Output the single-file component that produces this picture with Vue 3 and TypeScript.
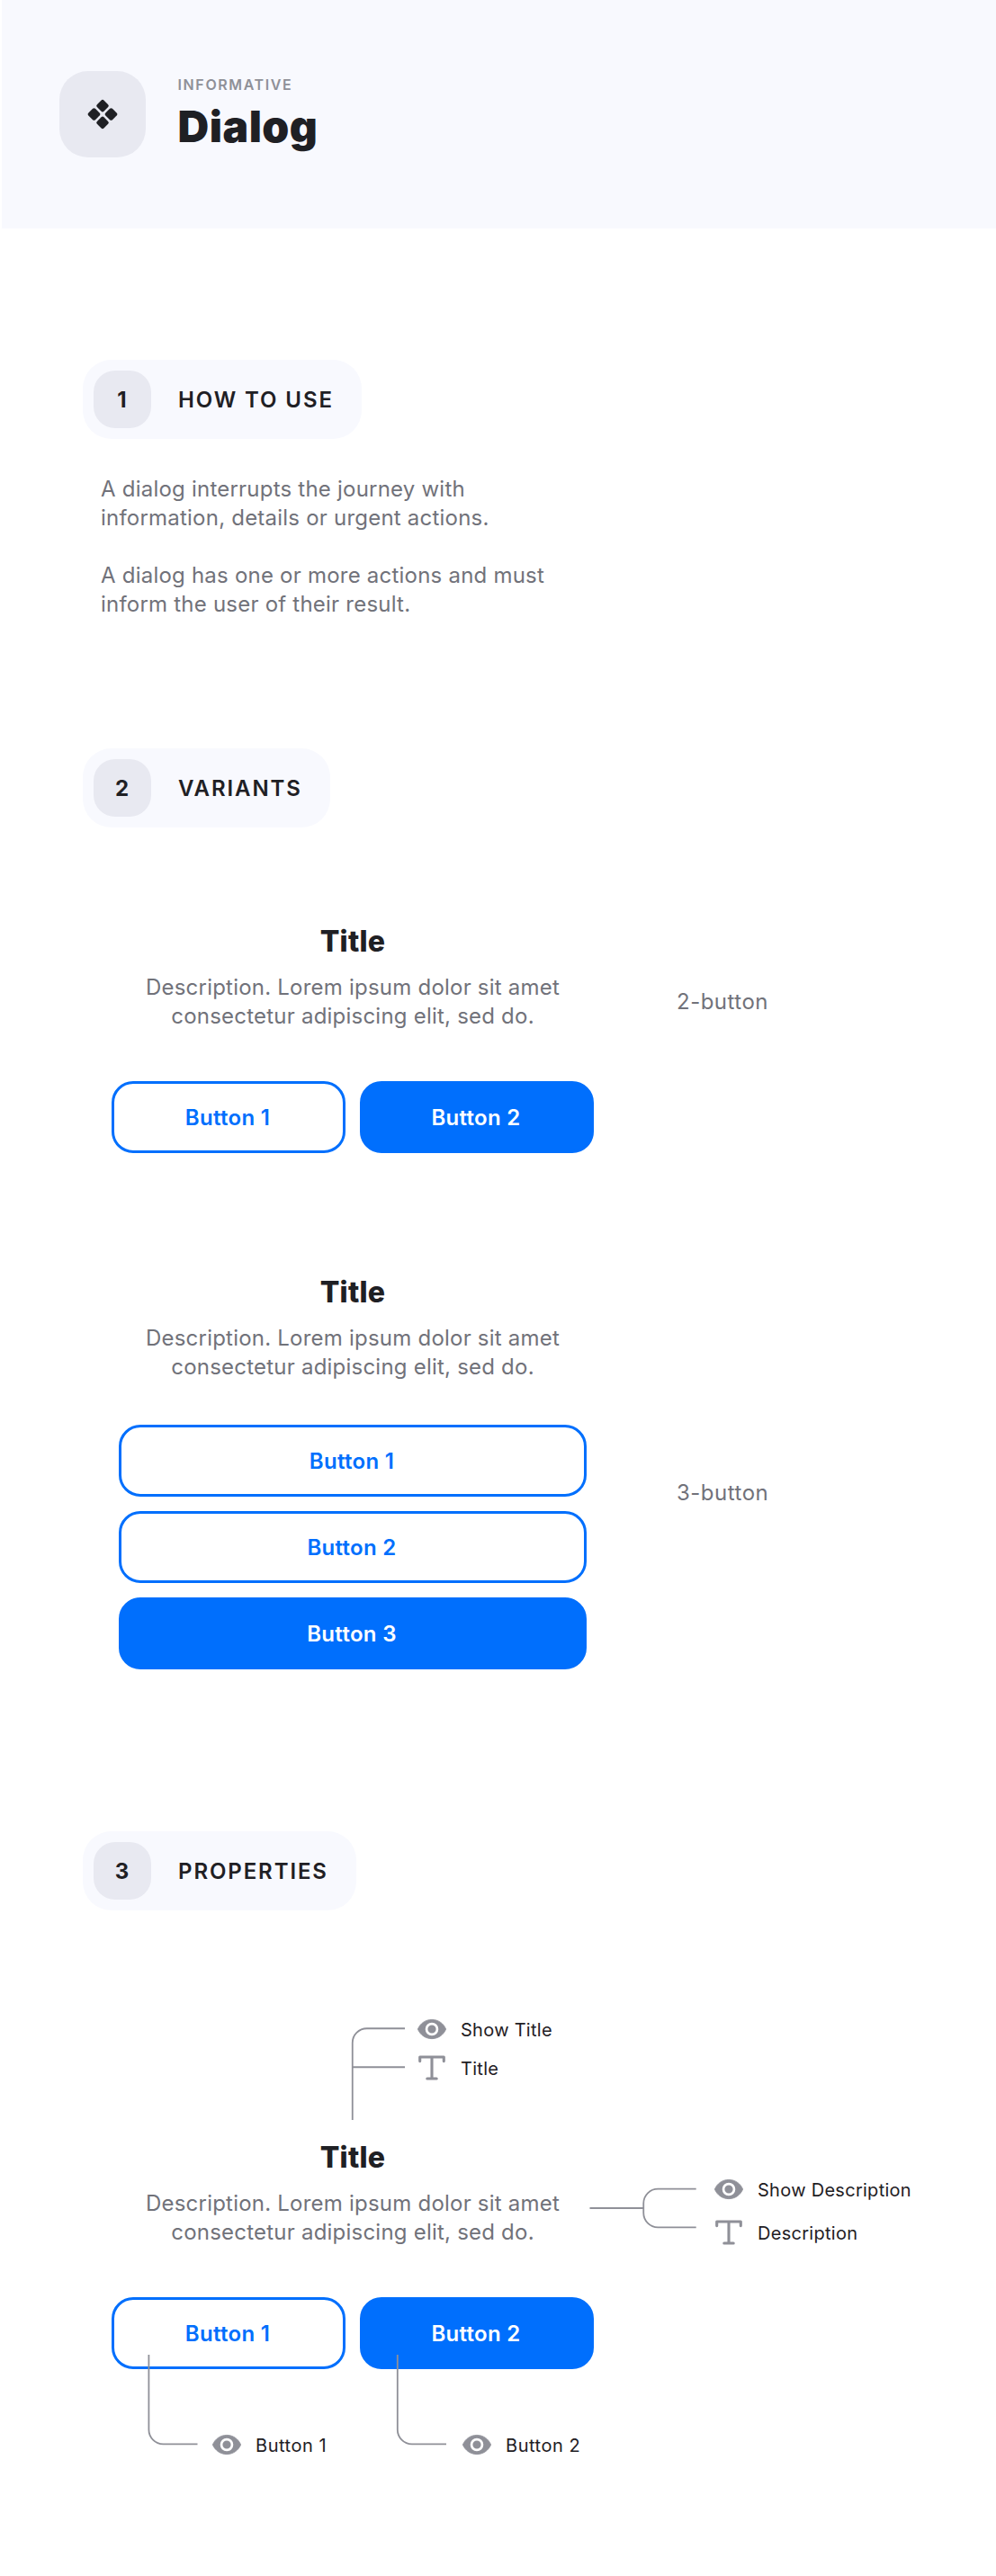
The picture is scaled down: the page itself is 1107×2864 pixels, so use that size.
<script setup lang="ts">
type IconName = 'eye' | 'text'

interface DialogButton {
  label: string
  primary: boolean
}

interface Variant {
  name: string
  layout: 'row' | 'stack'
  buttons: DialogButton[]
}

interface Callout {
  id: string
  items: { icon: IconName; label: string }[]
}

const title = 'Title'
const description = ['Description. Lorem ipsum dolor sit amet', 'consectetur adipiscing elit, sed do.']

const twoButtons: DialogButton[] = [
  { label: 'Button 1', primary: false },
  { label: 'Button 2', primary: true },
]

const variants: Variant[] = [
  { name: '2-button', layout: 'row', buttons: twoButtons },
  {
    name: '3-button',
    layout: 'stack',
    buttons: [
      { label: 'Button 1', primary: false },
      { label: 'Button 2', primary: false },
      { label: 'Button 3', primary: true },
    ],
  },
]

const callouts: Callout[] = [
  {
    id: 'title',
    items: [
      { icon: 'eye', label: 'Show Title' },
      { icon: 'text', label: 'Title' },
    ],
  },
  {
    id: 'description',
    items: [
      { icon: 'eye', label: 'Show Description' },
      { icon: 'text', label: 'Description' },
    ],
  },
  { id: 'button-1', items: [{ icon: 'eye', label: 'Button 1' }] },
  { id: 'button-2', items: [{ icon: 'eye', label: 'Button 2' }] },
]

const connectors = [
  'M391.75 233V147.25a16 16 0 0 1 16-16H450M391.75 174.25H450',
  'M655.5 331H715.25M773.7 309.7H731.25a16 16 0 0 0-16 16V336.3a16 16 0 0 0 16 16H773.7',
  'M165.4 494V577.3a16 16 0 0 0 16 16H219.5',
  'M441.8 494V577.3a16 16 0 0 0 16 16H496',
]
</script>

<template>
  <div class="page">
    <header class="hero">
      <div class="hero-icon">
        <svg width="34" height="34" viewBox="-17 -17 34 34" aria-hidden="true">
          <g fill="#1f2024">
            <rect x="-5.35" y="-5.35" width="10.7" height="10.7" rx="2" transform="translate(0 -9.4) rotate(45)" />
            <rect x="-5.35" y="-5.35" width="10.7" height="10.7" rx="2" transform="translate(9.5 0) rotate(45)" />
            <rect x="-5.35" y="-5.35" width="10.7" height="10.7" rx="2" transform="translate(0 9.4) rotate(45)" />
            <rect x="-5.35" y="-5.35" width="10.7" height="10.7" rx="2" transform="translate(-9.5 0) rotate(45)" />
          </g>
        </svg>
      </div>
      <div class="hero-text">
        <span class="eyebrow">INFORMATIVE</span>
        <h1>Dialog</h1>
      </div>
    </header>

    <section class="usage">
      <h2 class="pill"><span class="badge">1</span><span class="pill-label">HOW TO USE</span></h2>
      <div class="prose">
        <p>A dialog interrupts the journey with<br />information, details or urgent actions.</p>
        <p>A dialog has one or more actions and must<br />inform the user of their result.</p>
      </div>
    </section>

    <section class="variants">
      <h2 class="pill"><span class="badge">2</span><span class="pill-label">VARIANTS</span></h2>
      <div v-for="v in variants" :key="v.name" class="variant" :class="v.layout">
        <article class="dialog">
          <h3>{{ title }}</h3>
          <p class="desc">{{ description[0] }}<br />{{ description[1] }}</p>
          <div class="actions" :class="v.layout">
            <button v-for="b in v.buttons" :key="b.label" class="btn" :class="{ primary: b.primary }">{{ b.label }}</button>
          </div>
        </article>
        <span class="variant-name">{{ v.name }}</span>
      </div>
    </section>

    <section>
      <h2 class="pill"><span class="badge">3</span><span class="pill-label">PROPERTIES</span></h2>
      <div class="diagram">
        <article class="dialog">
          <h3>{{ title }}</h3>
          <p class="desc">{{ description[0] }}<br />{{ description[1] }}</p>
          <div class="actions row">
            <button v-for="b in twoButtons" :key="b.label" class="btn" :class="{ primary: b.primary }">{{ b.label }}</button>
          </div>
        </article>
        <svg class="wires" width="1107" height="740" viewBox="0 0 1107 740" aria-hidden="true">
          <path v-for="d in connectors" :key="d" :d="d" />
        </svg>
        <ul v-for="c in callouts" :key="c.id" class="callout" :class="c.id">
          <li v-for="item in c.items" :key="item.label">
            <svg v-if="item.icon === 'eye'" width="34" height="34" viewBox="0 0 24 24" aria-hidden="true">
              <path
                d="M12 4.5C7 4.5 2.73 7.61 1 12c1.73 4.39 6 7.5 11 7.5s9.27-3.11 11-7.5c-1.73-4.39-6-7.5-11-7.5z"
                fill="#8f9098"
                stroke="#8f9098"
                stroke-width=".6"
                stroke-linejoin="round"
              />
              <circle cx="12" cy="12" r="4.2" fill="#8f9098" stroke="#fff" stroke-width="1.9" />
            </svg>
            <svg v-else width="34" height="34" viewBox="-17 -17 34 34" aria-hidden="true">
              <path
                d="M-13.3-7.4V-12H13.3V-7.4M0-12V12M-5.2 12H5.2"
                fill="none"
                stroke="#8f9098"
                stroke-width="3.1"
                stroke-linecap="round"
                stroke-linejoin="round"
              />
            </svg>
            <span>{{ item.label }}</span>
          </li>
        </ul>
      </div>
    </section>
  </div>
</template>

<style>
body {
  margin: 0;
  background: #fff;
}
</style>

<style scoped>
.page {
  width: 1107px;
  height: 2864px;
  overflow: hidden;
  font-family: Inter, 'Liberation Sans', sans-serif;
  color: #1f2024;
}

h1,
h2,
h3,
p,
ul {
  margin: 0;
  padding: 0;
}

.hero {
  display: flex;
  align-items: center;
  gap: 35.6px;
  height: 254px;
  margin-left: 2px;
  padding-left: 64px;
  box-sizing: border-box;
  background: #f8f9fe;
}

.hero-icon {
  display: flex;
  align-items: center;
  justify-content: center;
  width: 96px;
  height: 96px;
  border-radius: 32px;
  background: #e8e9f1;
}

.hero-text {
  display: flex;
  flex-direction: column;
  gap: 8px;
}

.eyebrow {
  font-size: 16px;
  line-height: 20px;
  font-weight: 600;
  letter-spacing: 1.6px;
  color: #8f9098;
}

h1 {
  font-size: 48px;
  line-height: 58px;
  font-weight: 900;
  letter-spacing: 0.5px;
}

.usage {
  padding-top: 146px;
}

.pill {
  display: flex;
  align-items: center;
  gap: 30px;
  width: max-content;
  height: 88px;
  margin-left: 92px;
  padding: 0 31px 0 12px;
  box-sizing: border-box;
  border-radius: 32px;
  background: #f8f9fe;
  font-size: 24px;
  line-height: 32px;
}

.badge {
  display: flex;
  align-items: center;
  justify-content: center;
  width: 64px;
  height: 64px;
  padding: 2px 1px 0 0;
  box-sizing: border-box;
  border-radius: 24px;
  background: #e8e9f1;
  font-weight: 700;
}

.pill-label {
  padding-top: 2px;
  font-weight: 600;
  letter-spacing: 1.9px;
}

.prose {
  display: flex;
  flex-direction: column;
  gap: 32px;
  margin: 40px 0 144px 112px;
  font-size: 24px;
  line-height: 32px;
  letter-spacing: 0.22px;
  color: #71727a;
}

.variant {
  display: flex;
  align-items: flex-start;
  gap: 92px;
  padding-left: 124px;
}

.variant.row {
  margin-top: 107px;
}

.variant.stack {
  margin-top: 135px;
}

.variant-name {
  margin-top: 71px;
  font-size: 24px;
  line-height: 32px;
  letter-spacing: 0.5px;
  color: #71727a;
}

.variant.stack .variant-name {
  margin-top: 227px;
}

.dialog {
  width: 536px;
  text-align: center;
}

h3 {
  font-size: 32px;
  line-height: 40px;
  font-weight: 800;
  letter-spacing: 0.25px;
}

.desc {
  margin-top: 15px;
  font-size: 24px;
  line-height: 32px;
  letter-spacing: 0.22px;
  color: #71727a;
}

.actions {
  display: flex;
  gap: 16px;
}

.actions.row {
  margin-top: 56px;
}

.actions.stack {
  flex-direction: column;
  margin: 48px 8px 0;
}

.btn {
  flex: 1 1 0;
  height: 80px;
  min-height: 80px;
  padding: 2px 2px 0 0;
  box-sizing: border-box;
  border: 3px solid #006ffd;
  border-radius: 24px;
  background: #fff;
  color: #006ffd;
  font: 600 24px/32px Inter, 'Liberation Sans', sans-serif;
  letter-spacing: 0.3px;
}

.btn.primary {
  background: #006ffd;
  color: #fff;
}

.variants {
  margin-bottom: 180px;
}

.diagram {
  position: relative;
  height: 740px;
  padding: 255px 0 0 124px;
  box-sizing: border-box;
}

.wires {
  position: absolute;
  left: 0;
  top: 0;
  fill: none;
  stroke: #8f9098;
  stroke-width: 1.8;
}

.callout {
  position: absolute;
  display: flex;
  flex-direction: column;
  list-style: none;
}

.callout li {
  display: flex;
  align-items: center;
  gap: 15px;
  height: 34px;
  font-size: 20px;
  line-height: 24px;
  letter-spacing: 0.28px;
  white-space: nowrap;
}

.callout span {
  padding-top: 2px;
}

.callout.title {
  left: 463px;
  top: 115px;
  gap: 9px;
}

.callout.description {
  left: 793px;
  top: 293px;
  gap: 14px;
}

.callout.button-1 {
  left: 235px;
  top: 577px;
}

.callout.button-2 {
  left: 513px;
  top: 577px;
}

.callout.button-1 li,
.callout.button-2 li {
  letter-spacing: 0.55px;
}
</style>
